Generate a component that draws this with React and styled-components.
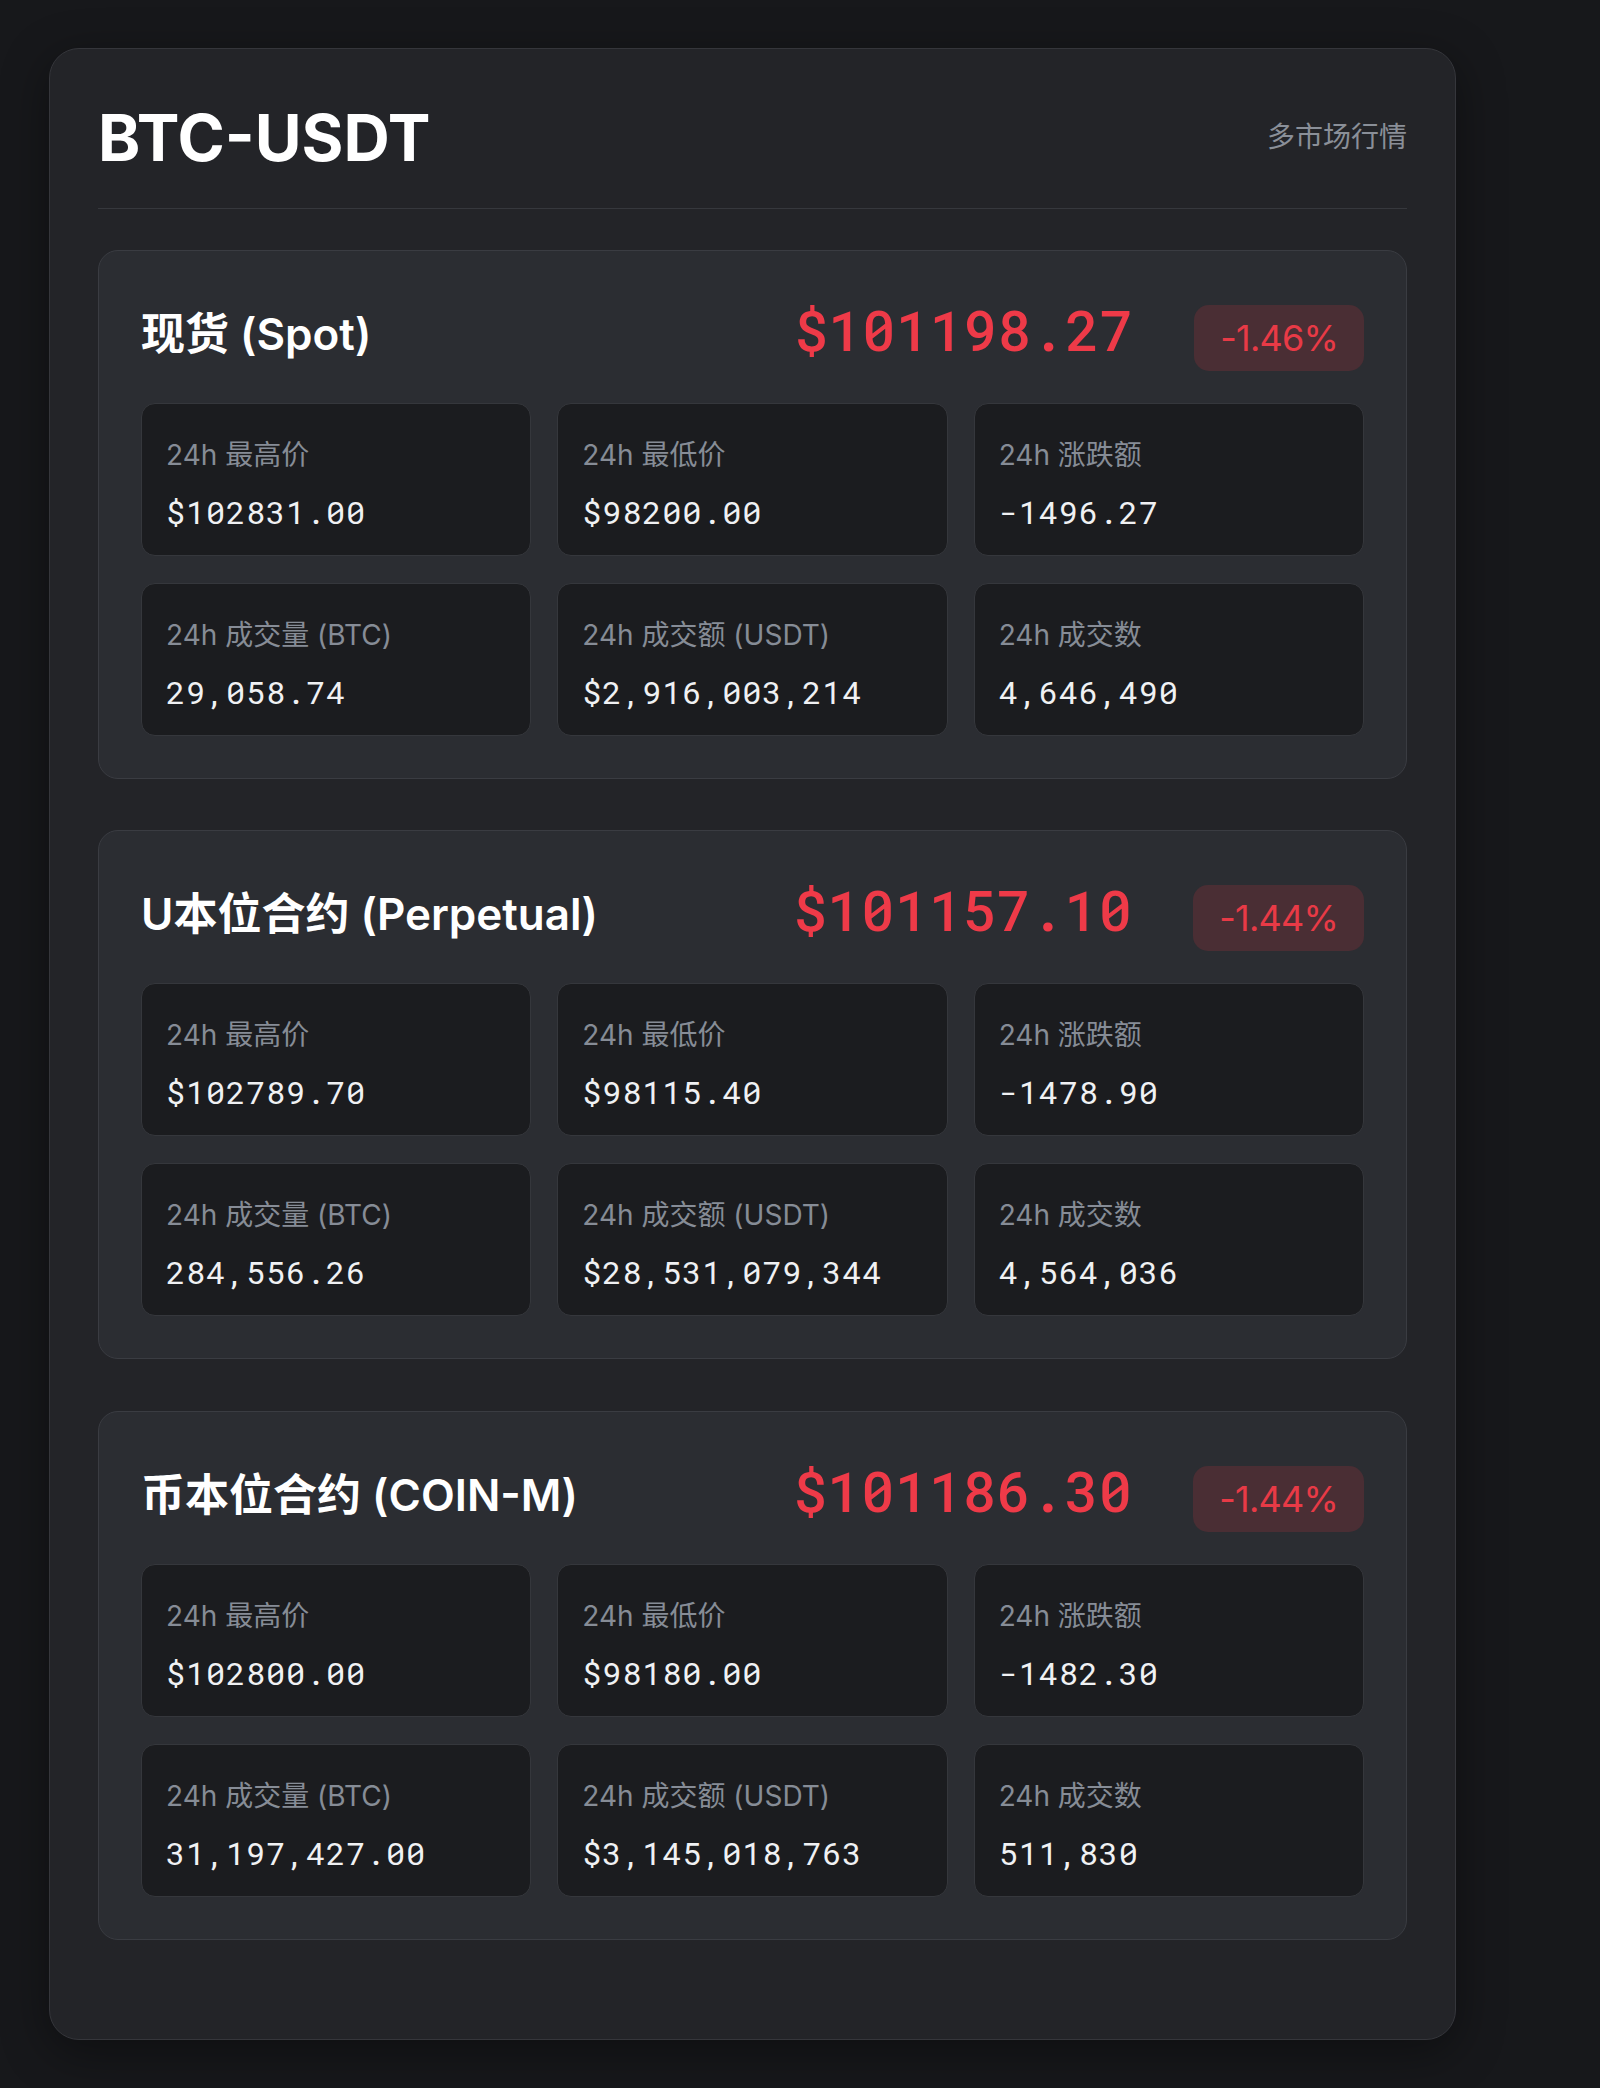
import styled, { createGlobalStyle } from 'styled-components';

const GlobalStyle = createGlobalStyle`
	body {
		margin: 0;
		background: #17181b;
		font-family: Inter, 'Noto Sans CJK SC', sans-serif;
	}
`;

const markets = [
	{
		name: '现货 (Spot)',
		price: '$101198.27',
		change: '-1.46%',
		stats: [
			['24h 最高价', '$102831.00'],
			['24h 最低价', '$98200.00'],
			['24h 涨跌额', '-1496.27'],
			['24h 成交量 (BTC)', '29,058.74'],
			['24h 成交额 (USDT)', '$2,916,003,214'],
			['24h 成交数', '4,646,490'],
		],
	},
	{
		name: 'U本位合约 (Perpetual)',
		price: '$101157.10',
		change: '-1.44%',
		stats: [
			['24h 最高价', '$102789.70'],
			['24h 最低价', '$98115.40'],
			['24h 涨跌额', '-1478.90'],
			['24h 成交量 (BTC)', '284,556.26'],
			['24h 成交额 (USDT)', '$28,531,079,344'],
			['24h 成交数', '4,564,036'],
		],
	},
	{
		name: '币本位合约 (COIN-M)',
		price: '$101186.30',
		change: '-1.44%',
		stats: [
			['24h 最高价', '$102800.00'],
			['24h 最低价', '$98180.00'],
			['24h 涨跌额', '-1482.30'],
			['24h 成交量 (BTC)', '31,197,427.00'],
			['24h 成交额 (USDT)', '$3,145,018,763'],
			['24h 成交数', '511,830'],
		],
	},
];

const Page = styled.div`
	padding: 48px 48px 48px 49px;
`;

const Card = styled.div`
	box-sizing: border-box;
	width: 1407px;
	padding: 48px;
	background: #232428;
	border: 1px solid #35363b;
	border-radius: 30px;
	box-shadow: 0 12px 48px rgba(0, 0, 0, 0.4);
`;

const Header = styled.div`
	display: flex;
	justify-content: space-between;
	align-items: center;
	padding-bottom: 30px;
	border-bottom: 1px solid #36383d;
	margin-bottom: 41px;
`;

const Title = styled.h1`
	margin: 0;
	font-size: 64px;
	line-height: 81px;
	font-weight: 700;
	color: #ffffff;
`;

const Subtitle = styled.span`
	font-size: 28px;
	line-height: 1;
	margin-top: -2px;
	color: #8a8f98;
`;

const Section = styled.section`
	background: #2b2d32;
	border: 1px solid #3a3c42;
	border-radius: 20px;
	padding: 42px;
	margin-bottom: 51.5px;
`;

const SectionHeader = styled.div`
	display: flex;
	justify-content: space-between;
	align-items: center;
	height: 76px;
	margin-bottom: 34px;
`;

const SectionTitle = styled.h2`
	margin: 0;
	font-size: 44px;
	font-weight: 600;
	color: #ffffff;
`;

const PriceGroup = styled.div`
	display: flex;
	align-items: baseline;
	gap: 61px;
`;

const Price = styled.span`
	font-family: 'Roboto Mono', 'DejaVu Sans Mono', monospace;
	font-size: 56px;
	line-height: 76px;
	font-weight: 500;
	letter-spacing: 0.3px;
	color: ${(p) => (p.$down ? '#ee3a48' : '#2ebd85')};
`;

const Change = styled.span`
	font-size: 36px;
	line-height: 44px;
	letter-spacing: -0.8px;
	padding: 11px 26px;
	border-radius: 15px;
	color: ${(p) => (p.$down ? '#e83a46' : '#2ebd85')};
	background: ${(p) => (p.$down ? '#4a2e34' : '#1f3a30')};
`;

const StatGrid = styled.div`
	display: grid;
	grid-template-columns: repeat(3, 1fr);
	gap: 27px 26px;
`;

const StatBox = styled.div`
	background: #1b1c1f;
	border: 1px solid #35373c;
	border-radius: 14px;
	padding: 35px 24px 24px;
`;

const StatLabel = styled.div`
	font-size: 28px;
	line-height: 1.2;
	color: #868c96;
	margin-bottom: 20px;
`;

const StatValue = styled.div`
	font-family: 'Roboto Mono', 'DejaVu Sans Mono', monospace;
	font-size: 32px;
	line-height: 1.2;
	letter-spacing: 0.025em;
	color: #f0f1f3;
`;

const MarketSection = ({ market }) => {
	const down = market.change.startsWith('-');
	return (
		<Section>
			<SectionHeader>
				<SectionTitle>{market.name}</SectionTitle>
				<PriceGroup>
					<Price $down={down}>{market.price}</Price>
					<Change $down={down}>{market.change}</Change>
				</PriceGroup>
			</SectionHeader>
			<StatGrid>
				{market.stats.map(([label, value]) => (
					<StatBox key={label}>
						<StatLabel>{label}</StatLabel>
						<StatValue>{value}</StatValue>
					</StatBox>
				))}
			</StatGrid>
		</Section>
	);
};

export default function App() {
	return (
		<Page>
			<GlobalStyle />
			<Card>
				<Header>
					<Title>BTC-USDT</Title>
					<Subtitle>多市场行情</Subtitle>
				</Header>
				{markets.map((m) => (
					<MarketSection key={m.name} market={m} />
				))}
			</Card>
		</Page>
	);
}
